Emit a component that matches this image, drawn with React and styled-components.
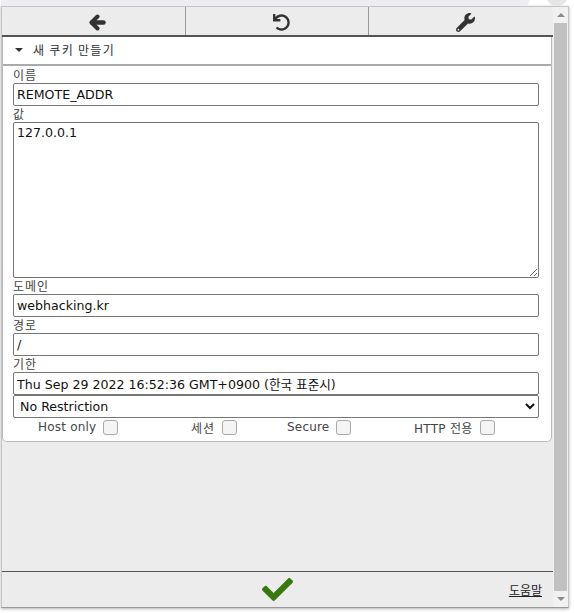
import styled, { createGlobalStyle } from "styled-components";
import { FaUndo, FaWrench, FaCheck } from "react-icons/fa";

const Global = createGlobalStyle`
  html, body { margin: 0; padding: 0; background: #fff; }
  body { font-family: "DejaVu Sans", "Noto Sans CJK KR", sans-serif; }
`;

const Page = styled.div`
  height: 613px;
  box-sizing: border-box;
  padding: 0 5px 5px 1px;
  overflow: hidden;
`;

const TopStrip = styled.div`
  display: flex;
  justify-content: space-between;
  height: 6px;
  overflow: hidden;
`;

const TabEdge = styled.div`
  width: 530px;
  height: 6px;
  margin-left: -1px;
  background: #eceef1;
  border-radius: 0 0 10px 0;
`;

const Avatar = styled.div`
  flex: none;
  width: 22px;
  height: 22px;
  margin: -16px 1px 0 0;
  border-radius: 50%;
  background: #e4e5e7;
`;

const Popup = styled.div`
  display: flex;
  height: 602px;
  box-sizing: border-box;
  border: 1px solid #c4c4c4;
  border-bottom-color: #999;
  background: #ececec;
  box-shadow: 0 1px 3px rgba(0, 0, 0, 0.3);
`;

const Main = styled.div`
  flex: 1;
  min-width: 0;
  display: flex;
  flex-direction: column;
`;

const Toolbar = styled.div`
  display: grid;
  grid-template-columns: 183px 183px 1fr;
  height: 28px;
  flex: none;
  border-bottom: 2px solid #555;
`;

const ToolButton = styled.div`
  display: flex;
  align-items: center;
  justify-content: center;
  padding: 2px 0 0 ${(p) => p.$shift}px;
  color: #333;
  font-size: ${(p) => p.$size}px;
  border-left: ${(p) => (p.$first ? "none" : "1px solid #999")};
`;

const Card = styled.div`
  background: #fff;
  border: 1px solid #bbb;
  border-top: none;
  border-radius: 0 0 5px 5px;
  margin-right: 1px;
`;

const CardHeader = styled.div`
  display: flex;
  align-items: center;
  height: 27px;
  gap: 10px;
  padding: 0 0 2px 12px;
  box-sizing: content-box;
  height: 25px;
  border-bottom: 2px solid #aaa;
  font-family: "Noto Sans CJK KR", sans-serif;
  font-size: 12px;
  letter-spacing: 1.3px;
  color: #333;
`;

const Caret = styled.span`
  width: 0;
  height: 0;
  border-left: 4px solid transparent;
  border-right: 4px solid transparent;
  border-top: 4px solid #333;
`;

const Form = styled.div`
  display: flex;
  flex-direction: column;
  padding: 0 12px 5px 10px;
`;

const Label = styled.label`
  display: block;
  height: 16px;
  line-height: 16px;
  font-family: "Noto Sans CJK KR", sans-serif;
  font-size: 12px;
  letter-spacing: 1px;
  color: #444;
  margin-top: ${(p) => p.$top || 0}px;
`;

const Input = styled.input`
  display: block;
  width: 100%;
  box-sizing: border-box;
  height: 23px;
  padding: 0 3px;
  border: 1px solid #767676;
  border-radius: 2px;
  background: #fff;
  color: #111;
  font-family: "DejaVu Sans", "Noto Sans CJK KR", sans-serif;
  font-size: 12.6px;
  outline: none;
`;

const TextArea = styled.textarea`
  display: block;
  width: 100%;
  box-sizing: border-box;
  height: 156px;
  padding: 2px 3px;
  margin: 0;
  border: 1px solid #767676;
  border-radius: 2px;
  color: #111;
  font-family: "DejaVu Sans", sans-serif;
  font-size: 12.6px;
  outline: none;
`;

const Select = styled.select`
  display: block;
  width: 100%;
  box-sizing: border-box;
  height: 23px;
  padding-left: 2px;
  border: 1px solid #767676;
  border-radius: 2px;
  background: #fff;
  color: #111;
  font-family: "DejaVu Sans", sans-serif;
  font-size: 12.6px;
  outline: none;
`;

const Options = styled.div`
  display: grid;
  grid-template-columns: 153px 96px 127px 1fr;
  height: 18px;
  align-items: center;
  padding-left: 25px;
`;

const Option = styled.label`
  display: flex;
  align-items: center;
  gap: 7px;
  font-size: 12px;
  letter-spacing: ${(p) => p.$spacing || 0.2}px;
  color: #444;
`;

const Check = styled.span`
  display: block;
  width: 13px;
  height: 13px;
  border: 1px solid #aaa;
  border-radius: 3px;
  background: #f4f4f4;
`;

const Spacer = styled.div`
  flex: 1;
`;

const Footer = styled.div`
  position: relative;
  flex: none;
  height: 35px;
  border-top: 1px solid #555;
  display: flex;
  align-items: center;
  justify-content: center;
  color: #38780f;
  font-size: 31px;
`;

const Help = styled.a`
  position: absolute;
  right: 11px;
  top: 9px;
  font-family: "Noto Sans CJK KR", sans-serif;
  font-size: 12px;
  color: #222;
  text-decoration: underline;
`;

const Scrollbar = styled.div`
  flex: none;
  width: 15px;
  display: flex;
  flex-direction: column;
  align-items: center;
  background: #f1f1f1;
`;

const Arrow = styled.span`
  flex: none;
  width: 0;
  height: 0;
  margin: 6px 0;
  border-left: 4px solid transparent;
  border-right: 4px solid transparent;
  border-${(p) => (p.$down ? "top" : "bottom")}: 4px solid #8a8a8a;
`;

const Thumb = styled.div`
  flex: 1;
  width: 13px;
  background: #c1c1c1;
`;

function BackIcon() {
  return (
    <svg width="18" height="17" viewBox="0 0 18 17" fill="none" stroke="currentColor">
      <path d="M9.5 2.5 L3.5 8.5 L9.5 14.5" strokeWidth="4" strokeLinecap="round" strokeLinejoin="round" />
      <path d="M4 8.5 H15.5" strokeWidth="4.5" strokeLinecap="round" />
    </svg>
  );
}

export default function App() {
  return (
    <Page>
      <Global />
      <TopStrip>
        <TabEdge />
        <Avatar />
      </TopStrip>
      <Popup>
        <Main>
          <Toolbar>
            <ToolButton $first $shift={6} $size={18}><BackIcon /></ToolButton>
            <ToolButton $shift={8} $size={17}><FaUndo /></ToolButton>
            <ToolButton $shift={8} $size={19}><FaWrench /></ToolButton>
          </Toolbar>
          <Card>
            <CardHeader><Caret />새 쿠키 만들기</CardHeader>
            <Form>
              <Label $top={1}>이름</Label>
              <Input defaultValue="REMOTE_ADDR" />
              <Label>값</Label>
              <TextArea defaultValue="127.0.0.1" />
              <Label>도메인</Label>
              <Input defaultValue="webhacking.kr" />
              <Label>경로</Label>
              <Input defaultValue="/" />
              <Label>기한</Label>
              <Input defaultValue="Thu Sep 29 2022 16:52:36 GMT+0900 (한국 표준시)" />
              <Select defaultValue="none">
                <option value="none">No Restriction</option>
              </Select>
              <Options>
                <Option>Host only <Check /></Option>
                <Option $spacing={1}>세션 <Check /></Option>
                <Option>Secure <Check /></Option>
                <Option $spacing={0.3}>HTTP 전용 <Check /></Option>
              </Options>
            </Form>
          </Card>
          <Spacer />
          <Footer>
            <FaCheck />
            <Help href="#">도움말</Help>
          </Footer>
        </Main>
        <Scrollbar>
          <Arrow />
          <Thumb />
          <Arrow $down />
        </Scrollbar>
      </Popup>
    </Page>
  );
}
